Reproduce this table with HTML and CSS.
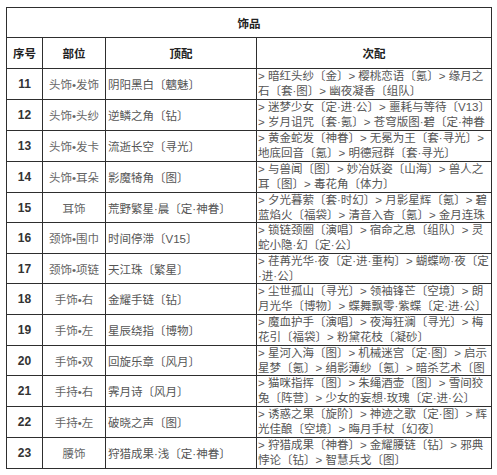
FILE: index.html
```html
<!DOCTYPE html>
<html lang="zh">
<head>
<meta charset="utf-8">
<link rel="stylesheet" href="styles.css">
</head>
<body>
<table class="tbl">
  <colgroup>
    <col class="c1"><col class="c2"><col class="c3"><col class="c4">
  </colgroup>
  <tr class="title"><th colspan="4">饰品</th></tr>
  <tr class="head"><th>序号</th><th>部位</th><th>顶配</th><th>次配</th></tr>
  <tr class="r31"><td class="no">11</td><td class="part">头饰•发饰</td><td class="top">阴阳黑白〔魑魅〕</td><td class="sub"><div class="ln">&gt; 暗红头纱〔金〕&gt; 樱桃恋语〔氪〕&gt; 缘月之</div><div class="ln">石〔套·图〕&gt; 幽夜凝香〔组队〕</div></td></tr>
  <tr class="r31"><td class="no">12</td><td class="part">头饰•头纱</td><td class="top">逆鳞之角〔钻〕</td><td class="sub"><div class="ln">&gt; 迷梦少女〔定·进·公〕&gt; 噩耗与等待〔V13〕</div><div class="ln">&gt; 岁月诅咒〔套·氪〕&gt; 苍穹版图·碧〔定·神眷</div></td></tr>
  <tr class="r31"><td class="no">13</td><td class="part">头饰•发卡</td><td class="top">流逝长空〔寻光〕</td><td class="sub"><div class="ln">&gt; 黄金蛇发〔神眷〕&gt; 无冕为王〔套·寻光〕&gt;</div><div class="ln">地底回音〔氪〕&gt; 明德冠群〔套·寻光〕</div></td></tr>
  <tr class="r31"><td class="no">14</td><td class="part">头饰•耳朵</td><td class="top">影魔犄角〔图〕</td><td class="sub"><div class="ln">&gt; 与兽闻〔图〕&gt; 妙冶妖姿〔山海〕&gt; 兽人之</div><div class="ln">耳〔图〕&gt; 毒花角〔体力〕</div></td></tr>
  <tr class="r30"><td class="no">15</td><td class="part">耳饰</td><td class="top">荒野繁星·晨〔定·神眷〕</td><td class="sub"><div class="ln">&gt; 夕光暮萦〔套·时幻〕&gt; 月影星辉〔氪〕&gt; 碧</div><div class="ln">蓝焰火〔福袋〕&gt; 清音入杳〔氪〕&gt; 金月连珠</div></td></tr>
  <tr class="r31"><td class="no">16</td><td class="part">颈饰•围巾</td><td class="top">时间停滞〔V15〕</td><td class="sub"><div class="ln">&gt; 锁链颈圈〔演唱〕&gt; 宿命之息〔组队〕&gt; 灵</div><div class="ln">蛇小隐·幻〔定·公〕</div></td></tr>
  <tr class="r30"><td class="no">17</td><td class="part">颈饰•项链</td><td class="top">天江珠〔繁星〕</td><td class="sub"><div class="ln">&gt; 荏苒光华·夜〔定·进·重构〕&gt; 蝴蝶吻·夜〔定</div><div class="ln">·进·公〕</div></td></tr>
  <tr class="r31"><td class="no">18</td><td class="part">手饰•右</td><td class="top">金耀手链〔钻〕</td><td class="sub"><div class="ln">&gt; 尘世孤山〔寻光〕&gt; 领袖锋芒〔空境〕&gt; 朗</div><div class="ln">月光华〔博物〕&gt; 蝶舞飘零·紫蝶〔定·进·公〕</div></td></tr>
  <tr class="r31"><td class="no">19</td><td class="part">手饰•左</td><td class="top">星辰绕指〔博物〕</td><td class="sub"><div class="ln">&gt; 魔血护手〔演唱〕&gt; 夜海狂澜〔寻光〕&gt; 梅</div><div class="ln">花引〔福袋〕&gt; 粉黛花枝〔凝砂〕</div></td></tr>
  <tr class="r30"><td class="no">20</td><td class="part">手饰•双</td><td class="top">回旋乐章〔风月〕</td><td class="sub"><div class="ln">&gt; 星河入海〔图〕&gt; 机械迷宫〔定·图〕&gt; 启示</div><div class="ln">星梦〔氪〕&gt; 绢影薄纱〔氪〕&gt; 暗杀艺术〔图</div></td></tr>
  <tr class="r31"><td class="no">21</td><td class="part">手持•右</td><td class="top">霁月诗〔风月〕</td><td class="sub"><div class="ln">&gt; 猫咪指挥〔图〕&gt; 朱绳酒壶〔图〕&gt; 雪间狡</div><div class="ln">兔〔阵营〕&gt; 少女的妄想·玫瑰〔定·进·公〕</div></td></tr>
  <tr class="r31"><td class="no">22</td><td class="part">手持•左</td><td class="top">破晓之声〔图〕</td><td class="sub"><div class="ln">&gt; 诱惑之果〔旋阶〕&gt; 神迹之歌〔定·图〕&gt; 辉</div><div class="ln">光佳酿〔空境〕&gt; 晦月手杖〔幻夜〕</div></td></tr>
  <tr class="r31"><td class="no">23</td><td class="part">腰饰</td><td class="top">狩猎成果·浅〔定·神眷〕</td><td class="sub"><div class="ln">&gt; 狩猎成果〔神眷〕&gt; 金耀腰链〔钻〕&gt; 邪典</div><div class="ln">悖论〔钻〕&gt; 智慧兵戈〔图〕</div></td></tr>
</table>
</body>
</html>
```
FILE: styles.css
```css
html, body {
  margin: 0;
  padding: 0;
  background: #ffffff;
}
body {
  padding: 7px 6px;
  font-family: "Liberation Sans", "Noto Sans CJK SC", sans-serif;
  font-size: 11.5px;
  color: #555;
}
.tbl {
  border-collapse: collapse;
  table-layout: fixed;
  width: 485px;
}
.c1 { width: 36px; }
.c2 { width: 63px; }
.c3 { width: 151px; }
.c4 { width: 235px; }
.tbl th, .tbl td {
  border: 1px solid #2e2e2e;
  padding: 0;
  vertical-align: middle;
  overflow: hidden;
}
.title th {
  height: 29px;
  font-weight: bold;
  color: #222;
  text-align: center;
}
.head th {
  height: 30px;
  font-weight: bold;
  color: #222;
  text-align: center;
}
.r31 td { height: 30px; }
.r30 td { height: 29px; }
.no {
  text-align: center;
  font-weight: bold;
  font-size: 12px;
  color: #333;
}
.part {
  text-align: center;
  color: #666;
}
.top {
  text-align: left;
  padding-left: 2px !important;
  color: #555;
  white-space: nowrap;
}
.sub {
  padding-left: 1px !important;
  color: #555;
}
.ln {
  line-height: 15px;
  white-space: nowrap;
  overflow: hidden;
}
.r30 .ln {
  line-height: 14.5px;
}
```
